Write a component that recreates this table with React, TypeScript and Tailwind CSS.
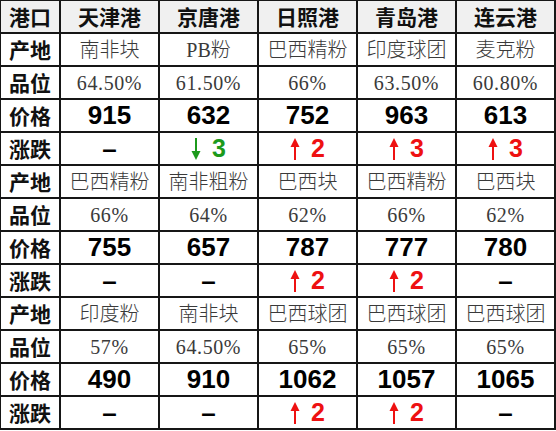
import React from "react"

type Change = { dir: "up" | "down"; n: number } | null

type Group = {
  origin: string[]
  grade: string[]
  price: string[]
  change: Change[]
}

const ports = ["天津港", "京唐港", "日照港", "青岛港", "连云港"]

const groups: Group[] = [
  {
    origin: ["南非块", "PB粉", "巴西精粉", "印度球团", "麦克粉"],
    grade: ["64.50%", "61.50%", "66%", "63.50%", "60.80%"],
    price: ["915", "632", "752", "963", "613"],
    change: [null, { dir: "down", n: 3 }, { dir: "up", n: 2 }, { dir: "up", n: 3 }, { dir: "up", n: 3 }],
  },
  {
    origin: ["巴西精粉", "南非粗粉", "巴西块", "巴西精粉", "巴西块"],
    grade: ["66%", "64%", "62%", "66%", "62%"],
    price: ["755", "657", "787", "777", "780"],
    change: [null, null, { dir: "up", n: 2 }, { dir: "up", n: 2 }, null],
  },
  {
    origin: ["印度粉", "南非块", "巴西球团", "巴西球团", "巴西球团"],
    grade: ["57%", "64.50%", "65%", "65%", "65%"],
    price: ["490", "910", "1062", "1057", "1065"],
    change: [null, null, { dir: "up", n: 2 }, { dir: "up", n: 2 }, null],
  },
]

const cjkBold = "font-['Noto_Sans_CJK_SC',sans-serif] font-bold text-[21px] text-[#111]"
const valueText = "font-['Liberation_Serif','Noto_Sans_CJK_SC',serif] font-light text-[20px] text-[#3a3a3a]"
const gradeText = "font-['Liberation_Serif',serif] text-[20px] tracking-[0.6px] text-[#3a3a3a]"
const numBold = "font-['Liberation_Sans',Arial,sans-serif] font-bold text-[26px] text-black"

function Arrow({ dir, color }: { dir: "up" | "down"; color: string }) {
  return (
    <svg width="10" height="22" viewBox="0 0 10 22" className={dir === "down" ? "rotate-180" : ""}>
      <polygon points="5,0 9.5,9 0.5,9" fill={color} />
      <rect x="4" y="8" width="2" height="14" fill={color} />
    </svg>
  )
}

function ChangeCell({ c }: { c: Change }) {
  if (!c) {
    return <span className={numBold + " leading-none"}>–</span>
  }
  const color = c.dir === "up" ? "#ee1111" : "#1c9a1c"
  return (
    <div className="flex items-center gap-[11px]">
      <Arrow dir={c.dir} color={color} />
      <span
        className="font-['Liberation_Sans',Arial,sans-serif] font-bold text-[25px] leading-none"
        style={{ color }}
      >
        {c.n}
      </span>
    </div>
  )
}

function Cell({ children, head }: { children: React.ReactNode; head?: boolean }) {
  return (
    <div className={`flex items-center justify-center overflow-hidden ${head ? "bg-[#f0f0f0]" : "bg-white"}`}>
      {children}
    </div>
  )
}

export default function App() {
  return (
    <div className="w-[556px] h-[431px] bg-white">
      <div className="inline-grid grid-cols-[58px_repeat(5,97px)] auto-rows-[31px] gap-[2px] pt-[1px] pl-[1px] pr-[2px] pb-[2px] bg-[#161616]">
        {/* header */}
        <Cell head>
          <span className={cjkBold}>港口</span>
        </Cell>
        {ports.map((p) => (
          <Cell head key={p}>
            <span className={cjkBold}>{p}</span>
          </Cell>
        ))}

        {groups.map((g, gi) => (
          <React.Fragment key={gi}>
            <Cell>
              <span className={cjkBold}>产地</span>
            </Cell>
            {g.origin.map((v, i) => (
              <Cell key={"o" + i}>
                <span className={valueText}>{v}</span>
              </Cell>
            ))}

            <Cell>
              <span className={cjkBold}>品位</span>
            </Cell>
            {g.grade.map((v, i) => (
              <Cell key={"g" + i}>
                <span className={gradeText}>{v}</span>
              </Cell>
            ))}

            <Cell>
              <span className={cjkBold}>价格</span>
            </Cell>
            {g.price.map((v, i) => (
              <Cell key={"p" + i}>
                <span className={numBold}>{v}</span>
              </Cell>
            ))}

            <Cell>
              <span className={cjkBold}>涨跌</span>
            </Cell>
            {g.change.map((c, i) => (
              <Cell key={"c" + i}>
                <ChangeCell c={c} />
              </Cell>
            ))}
          </React.Fragment>
        ))}
      </div>
    </div>
  )
}
